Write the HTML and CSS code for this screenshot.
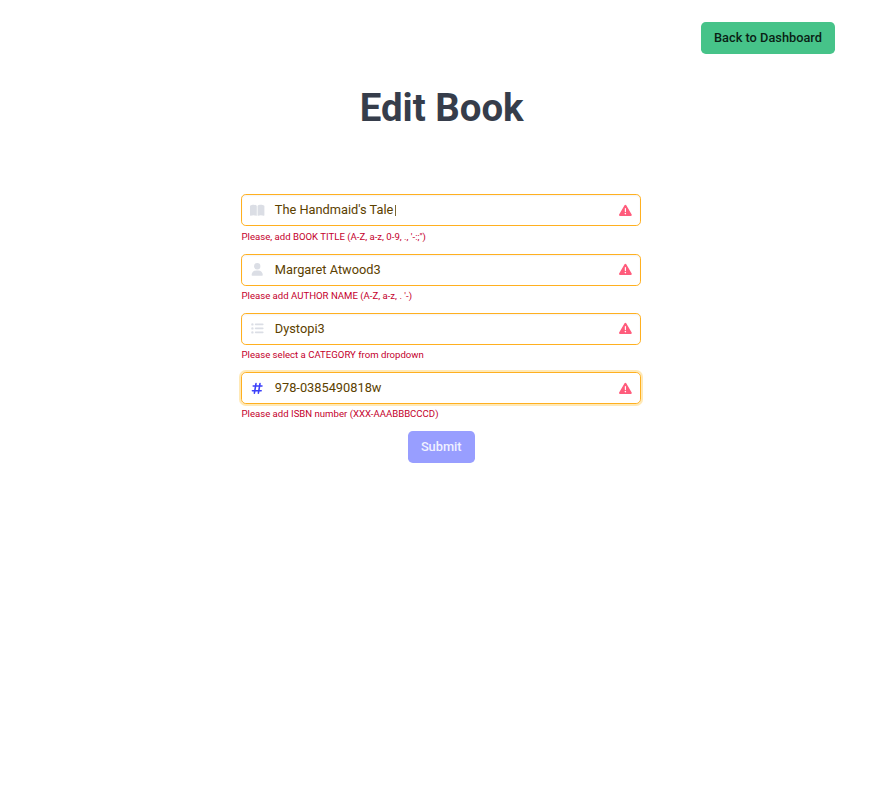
FILE: index.html
```html
<!DOCTYPE html>
<html lang="en">
<head>
<meta charset="utf-8">
<title>Edit Book</title>
<link rel="stylesheet" href="styles.css">
</head>
<body>
<header class="toolbar"><button class="button back">Back to Dashboard</button></header>
<main>
<h1>Edit Book</h1>
<form class="form">
  <div class="field">
    <div class="control">
      <svg class="icon" viewBox="0 0 576 512"><path d="M249.600 471.500c10.800 3.800 22.400-4.100 22.400-15.500V78.600c0-4.200-1.600-8.400-5-11C247.400 52 202.400 32 144 32C93.500 32 46.300 45.300 18.100 56.100C6.800 60.500 0 71.700 0 83.800V454.100c0 11.900 12.800 20.200 24.100 16.500C55.600 460.100 105.500 448 144 448c33.900 0 79 14 105.600 23.500zm76.800 0C353 462 398.100 448 432 448c38.500 0 88.400 12.100 119.900 22.600c11.300 3.800 24.100-4.600 24.100-16.500V83.800c0-12.100-6.800-23.300-18.100-27.600C529.700 45.300 482.500 32 432 32c-58.400 0-103.400 20-123 35.600c-3.300 2.600-5 6.800-5 11V456c0 11.400 11.700 19.300 22.400 15.500z"/></svg>
      <span class="value editing">The Handmaid's Tale<span class="caret"></span></span>
      <svg class="warning" viewBox="0 0 512 512"><path d="M256 32c14.200 0 27.300 7.500 34.500 19.800l216 368c7.300 12.400 7.300 27.700 .2 40.100S486.300 480 472 480H40c-14.300 0-27.600-7.700-34.700-20.100s-7-27.800 .2-40.100l216-368C228.700 39.500 241.800 32 256 32zm0 128c-13.300 0-24 10.700-24 24V296c0 13.300 10.700 24 24 24s24-10.700 24-24V184c0-13.300-10.700-24-24-24zm32 224a32 32 0 1 0-64 0 32 32 0 1 0 64 0z"/></svg>
    </div>
    <p class="help">Please, add BOOK TITLE (A-Z, a-z, 0-9, ., '-:;")</p>
  </div>
  <div class="field">
    <div class="control">
      <svg class="icon" viewBox="0 0 448 512"><path d="M224 256A128 128 0 1 0 224 0a128 128 0 1 0 0 256zm-45.700 48C79.800 304 0 383.800 0 482.300C0 498.700 13.300 512 29.700 512H418.300c16.400 0 29.700-13.300 29.700-29.700C448 383.800 368.200 304 269.700 304H178.300z"/></svg>
      <span class="value">Margaret Atwood3</span>
      <svg class="warning" viewBox="0 0 512 512"><path d="M256 32c14.200 0 27.300 7.500 34.500 19.800l216 368c7.300 12.400 7.300 27.700 .2 40.100S486.300 480 472 480H40c-14.300 0-27.600-7.700-34.700-20.100s-7-27.800 .2-40.100l216-368C228.700 39.500 241.800 32 256 32zm0 128c-13.300 0-24 10.700-24 24V296c0 13.300 10.700 24 24 24s24-10.700 24-24V184c0-13.300-10.700-24-24-24zm32 224a32 32 0 1 0-64 0 32 32 0 1 0 64 0z"/></svg>
    </div>
    <p class="help">Please add AUTHOR NAME (A-Z, a-z, . '-)</p>
  </div>
  <div class="field">
    <div class="control">
      <svg class="icon" viewBox="0 0 512 512"><path d="M64 144a48 48 0 1 0 0-96 48 48 0 1 0 0 96zM192 64c-17.700 0-32 14.300-32 32s14.300 32 32 32H480c17.700 0 32-14.300 32-32s-14.300-32-32-32H192zm0 160c-17.700 0-32 14.300-32 32s14.300 32 32 32H480c17.700 0 32-14.300 32-32s-14.300-32-32-32H192zm0 160c-17.700 0-32 14.300-32 32s14.300 32 32 32H480c17.700 0 32-14.300 32-32s-14.300-32-32-32H192zM64 464a48 48 0 1 0 0-96 48 48 0 1 0 0 96zm48-208a48 48 0 1 0-96 0 48 48 0 1 0 96 0z"/></svg>
      <span class="value">Dystopi3</span>
      <svg class="warning" viewBox="0 0 512 512"><path d="M256 32c14.200 0 27.300 7.500 34.500 19.800l216 368c7.300 12.400 7.300 27.700 .2 40.100S486.300 480 472 480H40c-14.300 0-27.600-7.700-34.700-20.100s-7-27.800 .2-40.100l216-368C228.700 39.500 241.800 32 256 32zm0 128c-13.300 0-24 10.700-24 24V296c0 13.300 10.700 24 24 24s24-10.700 24-24V184c0-13.300-10.700-24-24-24zm32 224a32 32 0 1 0-64 0 32 32 0 1 0 64 0z"/></svg>
    </div>
    <p class="help">Please select a CATEGORY from dropdown</p>
  </div>
  <div class="field">
    <div class="control focused">
      <svg class="icon" viewBox="0 0 448 512"><path d="M181.300 32.400c17.400 2.900 29.200 19.400 26.300 36.800L197.800 128h95.100l11.500-69.300c2.900-17.400 19.400-29.200 36.800-26.300s29.200 19.400 26.300 36.800L357.800 128H416c17.700 0 32 14.300 32 32s-14.300 32-32 32H347.100L325.800 320H384c17.700 0 32 14.300 32 32s-14.300 32-32 32H315.100l-11.500 69.300c-2.900 17.400-19.400 29.200-36.800 26.300s-29.200-19.400-26.300-36.800l9.800-58.700H155.100l-11.500 69.300c-2.900 17.400-19.400 29.200-36.800 26.300s-29.200-19.400-26.300-36.800L90.200 384H32c-17.700 0-32-14.300-32-32s14.300-32 32-32h68.900l21.300-128H64c-17.700 0-32-14.300-32-32s14.300-32 32-32h68.900l11.500-69.300c2.900-17.400 19.400-29.200 36.800-26.300zM187.100 192L165.800 320h95.100l21.300-128H187.100z"/></svg>
      <span class="value">978-0385490818w</span>
      <svg class="warning" viewBox="0 0 512 512"><path d="M256 32c14.200 0 27.300 7.500 34.500 19.800l216 368c7.300 12.400 7.300 27.700 .2 40.100S486.300 480 472 480H40c-14.300 0-27.600-7.700-34.700-20.100s-7-27.800 .2-40.100l216-368C228.700 39.500 241.800 32 256 32zm0 128c-13.300 0-24 10.700-24 24V296c0 13.300 10.700 24 24 24s24-10.700 24-24V184c0-13.300-10.700-24-24-24zm32 224a32 32 0 1 0-64 0 32 32 0 1 0 64 0z"/></svg>
    </div>
    <p class="help">Please add ISBN number (XXX-AAABBBCCCD)</p>
  </div>
  <button class="button submit" disabled>Submit</button>
</form>
</main>
</body>
</html>
```
FILE: styles.css
```css
* { box-sizing: border-box; }
body {
  margin: 0;
  background: #fff;
  font: 12.8px/1.5 Roboto, sans-serif;
}
.toolbar {
  display: flex;
  justify-content: flex-end;
  padding: 22px 44px 0 0;
}
.button {
  height: 32px;
  padding: 0 0 2px;
  border: 0;
  border-radius: 4.8px;
  font: 500 12.8px/19px Roboto, sans-serif;
}
.back { width: 134px; background: #46c389; color: #0a1f15; }
h1 {
  margin: 32px 0 0;
  padding-left: 4.4px;
  text-align: center;
  color: #363d4b;
  font-size: 38.4px;
  font-weight: 700;
  line-height: 43.2px;
}
.form {
  display: flex;
  flex-direction: column;
  gap: 9.6px;
  width: 400px;
  margin: 65.200px 0 0 241px;
}
.control {
  display: flex;
  align-items: center;
  height: 32px;
  padding: 0 8px 0 9px;
  border: 1px solid #ffb020;
  border-radius: 4.8px;
  box-shadow: inset 0 1px 2px rgba(10, 10, 10, .05);
  color: #5c4100;
}
.focused { box-shadow: 0 0 0 2px rgba(255, 183, 15, .3); }
.icon {
  width: 14.4px;
  height: 12.8px;
  margin-left: -.6px;
  fill: #dbdee5;
}
.focused .icon { fill: #3c41fa; }
.value {
  display: flex;
  align-items: center;
  flex: 1;
  margin-left: 10px;
}
.editing { padding-bottom: 1.6px; }
.caret { width: 1px; height: 11px; margin: 1px 0 0 1.4px; background: #7d6733; }
.warning { width: 12.8px; height: 12.8px; fill: #ff5c7c; }
.help {
  margin: 3.2px 0 0 .5px;
  color: #c4002c;
  font-size: 9.6px;
  line-height: 14.4px;
}
.submit { align-self: center; width: 67px; padding-left: .5px; background: #989eff; color: #f0f1ff; }
```
